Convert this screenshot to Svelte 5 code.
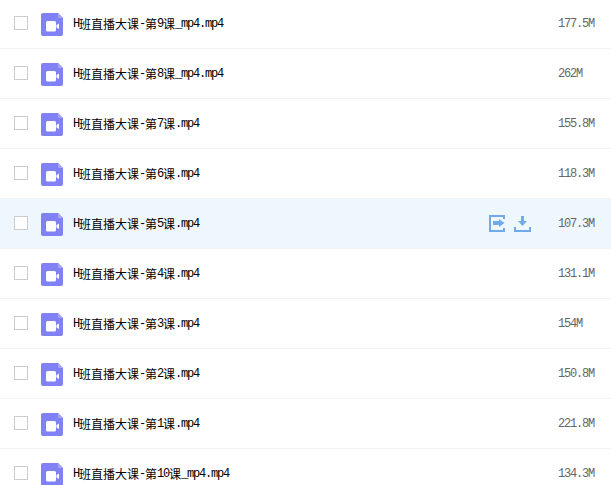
<script>
  const files = [
    { name: "H班直播大课-第9课_mp4.mp4", size: "177.5M" },
    { name: "H班直播大课-第8课_mp4.mp4", size: "262M" },
    { name: "H班直播大课-第7课.mp4", size: "155.8M" },
    { name: "H班直播大课-第6课.mp4", size: "118.3M" },
    { name: "H班直播大课-第5课.mp4", size: "107.3M", hover: true },
    { name: "H班直播大课-第4课.mp4", size: "131.1M" },
    { name: "H班直播大课-第3课.mp4", size: "154M" },
    { name: "H班直播大课-第2课.mp4", size: "150.8M" },
    { name: "H班直播大课-第1课.mp4", size: "221.8M" },
    { name: "H班直播大课-第10课_mp4.mp4", size: "134.3M" }
  ];

  // latin runs are half a CJK cell wide, like a bitmap song font
  const runs = (text) => text.match(/[\x00-\x7f]+|[^\x00-\x7f]+/g);
</script>

<ul class="list">
  {#each files as file}
    <li class="row" class:hover={file.hover}>
      <span class="check"></span>
      <svg class="file-icon" viewBox="0 0 22 23" width="22" height="23">
        <path d="M2 0H17L22 5V21a2 2 0 0 1-2 2H2a2 2 0 0 1-2-2V2a2 2 0 0 1 2-2Z" fill="#8081f5" />
        <path d="M17 0L22 5H18a1 1 0 0 1-1-1Z" fill="#a5a6f8" />
        <rect x="5" y="8" width="10" height="10.500" rx="1.500" fill="#fff" />
        <path d="M15.500 12L18 10.500V16L15.500 14.500Z" fill="#fff" />
      </svg>
      <span class="name">
        {#each runs(file.name) as run}
          {#if run.charCodeAt(0) < 128}<span class="lat">{run}</span>{:else}{run}{/if}
        {/each}
      </span>
      {#if file.hover}
        <span class="actions">
          <svg viewBox="0 0 17 17" width="17" height="17">
            <path d="M15 4V1H1V16H15V13" fill="none" stroke="#72a9e9" stroke-width="2" />
            <path d="M4 6H10V4L15.500 8L10 12V10H4Z" fill="#72a9e9" />
          </svg>
          <svg viewBox="0 0 17 17" width="17" height="17">
            <path d="M7 1H10V6H13L8.500 11L4 6H7Z" fill="#72a9e9" />
            <path d="M1 12V16H16V12" fill="none" stroke="#72a9e9" stroke-width="2" />
          </svg>
        </span>
      {/if}
      <span class="size lat">{file.size}</span>
    </li>
  {/each}
</ul>

<style>
  :global(body) {
    background: #fff;
    overflow: hidden;
  }
  .list {
    list-style: none;
    margin: -1px 0 0;
    padding: 0;
  }
  .row {
    display: flex;
    align-items: center;
    height: 49px;
    border-bottom: 1px solid #f2f3f5;
    padding-left: 14px;
    position: relative;
    font: 12px "Noto Sans CJK SC", "Liberation Mono", monospace;
    color: #000;
  }
  .row.hover {
    background: #eff7fe;
  }
  .check {
    width: 14px;
    height: 14px;
    box-sizing: border-box;
    border: 1px solid #ccc;
    background: #fff;
    margin-right: 13px;
    margin-top: -1px;
  }
  .file-icon {
    margin-right: 10px;
    margin-top: 2px;
  }
  .name {
    display: flex;
    white-space: pre;
    align-items: center;
    flex: 1;
  }
  .lat {
    font-family: "Liberation Mono", monospace;
    letter-spacing: -1.2px;
  }
  .actions {
    position: absolute;
    left: 489px;
    top: 16px;
    display: flex;
    gap: 8px;
  }
  .size {
    width: 53px;
    color: #666;
  }
</style>
